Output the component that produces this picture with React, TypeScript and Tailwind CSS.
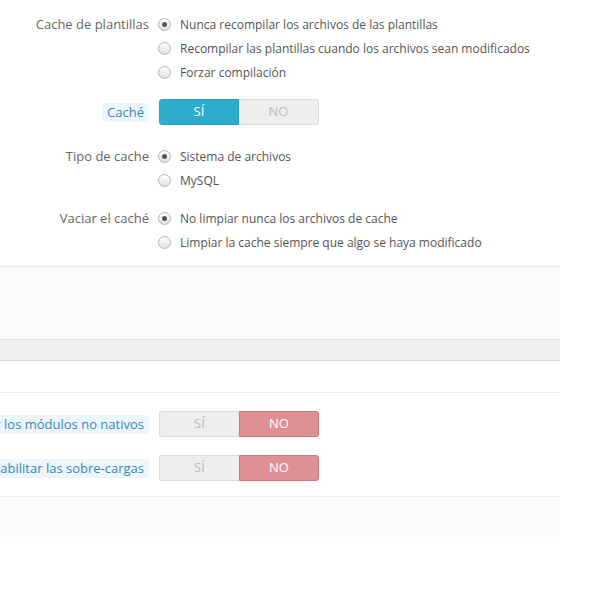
import React from "react";

type Opt = { label: string; checked?: boolean };

const Radio = ({ label, checked }: Opt) => (
  <div className="flex h-6 items-center">
    <span className="mr-[9px] flex h-[13px] w-[13px] items-center justify-center rounded-full border border-[#b5b5b5] bg-gradient-to-b from-white to-[#e3e3e3]">
      {checked && <span className="h-[5px] w-[5px] rounded-full bg-[#555]" />}
    </span>
    <span className="whitespace-nowrap pt-px text-[12px]">{label}</span>
  </div>
);

const Label = ({ text, hint }: { text: string; hint?: boolean }) => (
  <div className="flex w-[149px] shrink-0 justify-end whitespace-nowrap">
    {hint ? (
      <span className="rounded-[3px] bg-[#ecf6fc] px-[5px] leading-[19px] text-[#3c88b3]">
        {text}
      </span>
    ) : (
      <span className="leading-6 text-[#666]">{text}</span>
    )}
  </div>
);

const Toggle = ({ on }: { on: boolean }) => (
  <div className="ml-[10px] flex h-[26px] w-[160px] text-[13px]">
    {on ? (
      <>
        <div className="flex w-20 items-center justify-center rounded-l-[3px] border border-[#2a9dbc] bg-[#2eacce] text-white">
          SÍ
        </div>
        <div className="flex w-20 items-center justify-center rounded-r-[3px] border border-l-0 border-[#dcdcdc] bg-[#eeeeee] text-[#bbb]">
          NO
        </div>
      </>
    ) : (
      <>
        <div className="flex w-20 items-center justify-center rounded-l-[3px] border border-r-0 border-[#dcdcdc] bg-[#eeeeee] text-[#bbb]">
          SÍ
        </div>
        <div className="flex w-20 items-center justify-center rounded-r-[3px] border border-[#cf757d] bg-[#e08f95] text-white">
          NO
        </div>
      </>
    )}
  </div>
);

const RadioGroup = ({ title, options, className }: { title: string; options: Opt[]; className?: string }) => (
  <div className={`flex items-start ${className || ""}`}>
    <Label text={title} />
    <div className="ml-[9px] flex flex-col text-[#555]">
      {options.map((o) => (
        <Radio key={o.label} {...o} />
      ))}
    </div>
  </div>
);

export default function App() {
  return (
    <div className="h-[600px] w-[600px] overflow-hidden bg-white font-['Open_Sans',sans-serif] text-[13px]">
      <div className="w-[560px]">
        <div className="pt-3">
          <RadioGroup
            title="Cache de plantillas"
            options={[
              { label: "Nunca recompilar los archivos de las plantillas", checked: true },
              { label: "Recompilar las plantillas cuando los archivos sean modificados" },
              { label: "Forzar compilación" },
            ]}
          />
          <div className="mt-[15px] flex items-center">
            <Label text="Caché" hint />
            <Toggle on />
          </div>
          <RadioGroup
            className="mt-[19px]"
            title="Tipo de cache"
            options={[{ label: "Sistema de archivos", checked: true }, { label: "MySQL" }]}
          />
          <RadioGroup
            className="mt-[14px]"
            title="Vaciar el caché"
            options={[
              { label: "No limpiar nunca los archivos de cache", checked: true },
              { label: "Limpiar la cache siempre que algo se haya modificado" },
            ]}
          />
        </div>
        <div className="mt-3 h-[73px] border-t border-[#e9ecee] bg-[#fafbfd]" />
        <div className="h-[22px] border-y border-[#d5dadd] border-t-[#e2e5e7] bg-[#eff0f2]" />
        <div className="h-[32px] border-b border-[#eaeced]" />
        <div className="pt-[18px]">
          <div className="flex items-center">
            <Label text="Deshabilitar los módulos no nativos" hint />
            <Toggle on={false} />
          </div>
          <div className="mt-[18px] flex items-center">
            <Label text="Deshabilitar las sobre-cargas" hint />
            <Toggle on={false} />
          </div>
        </div>
        <div className="mt-[15px] h-[41px] border-t border-[#e9ecee] bg-[#fafbfd]" />
      </div>
    </div>
  );
}
